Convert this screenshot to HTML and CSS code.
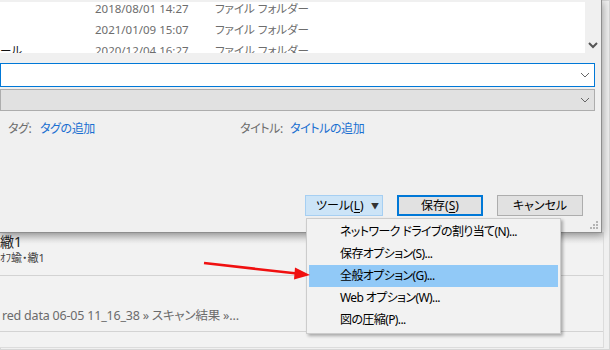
FILE: index.html
```html
<!DOCTYPE html>
<html lang="ja">
<head>
    <meta charset="UTF-8">
    <meta name="viewport" content="width=device-width, initial-scale=1.0">
    <title>名前を付けて保存 - ツール</title>
    <link rel="stylesheet" href="styles.css">
</head>
<body>
    <div class="desktop">
        <!-- window behind the dialog -->
        <div class="back-window">
            <div class="back-head">
                <div class="back-title">繖1</div>
                <div class="back-sub">ｵﾌ蝓・繖1</div>
            </div>
            <div class="crumbs">red data 06-05 11_16_38 » スキャン結果 »…</div>
        </div>

        <!-- save dialog -->
        <div class="dialog">
            <div class="file-pane">
                <div class="files">
                    <div class="file-row"><span class="name"></span><span class="date">2018/08/01 14:27</span><span class="kind">ファイル フォルダー</span></div>
                    <div class="file-row"><span class="name"></span><span class="date">2021/01/09 15:07</span><span class="kind">ファイル フォルダー</span></div>
                    <div class="file-row"><span class="name">ール</span><span class="date">2020/12/04 16:27</span><span class="kind">ファイル フォルダー</span></div>
                </div>
                <div class="scroll">
                    <svg width="10" height="7" viewBox="0 0 10 7"><path d="M1 1 L5 5 L9 1" fill="none" stroke="#555" stroke-width="2"/></svg>
                </div>
            </div>
            <div class="combo combo-active">
                <svg width="10" height="6" viewBox="0 0 10 6"><path d="M1 1 L5 5 L9 1" fill="none" stroke="#666" stroke-width="1"/></svg>
            </div>
            <div class="combo combo-disabled">
                <svg width="10" height="6" viewBox="0 0 10 6"><path d="M1 1 L5 5 L9 1" fill="none" stroke="#666" stroke-width="1"/></svg>
            </div>
            <div class="meta">
                <div class="meta-group">
                    <span class="meta-label">タグ:</span>
                    <span class="meta-link">タグの追加</span>
                </div>
                <div class="meta-group">
                    <span class="meta-label wide">タイトル:</span>
                    <span class="meta-link">タイトルの追加</span>
                </div>
            </div>
            <div class="actions">
                <button class="btn btn-tools">ツール(<u>L</u>)<span class="caret">▼</span></button>
                <button class="btn btn-default">保存(<u>S</u>)</button>
                <button class="btn">キャンセル</button>
            </div>
            <svg class="grip" width="8" height="8" viewBox="0 0 8 8">
                <rect x="6" y="0" width="2" height="2" fill="#b4b4b4"/>
                <rect x="3" y="3" width="2" height="2" fill="#b4b4b4"/>
                <rect x="6" y="3" width="2" height="2" fill="#b4b4b4"/>
                <rect x="0" y="6" width="2" height="2" fill="#b4b4b4"/>
                <rect x="3" y="6" width="2" height="2" fill="#b4b4b4"/>
                <rect x="6" y="6" width="2" height="2" fill="#b4b4b4"/>
            </svg>
        </div>

        <!-- tools dropdown -->
        <ul class="menu">
            <li>ネットワーク ドライブの割り当て(N)...</li>
            <li>保存オプション(S)...</li>
            <li class="hover">全般オプション(G)...</li>
            <li>Web オプション(W)...</li>
            <li>図の圧縮(P)...</li>
        </ul>

        <svg class="arrow" width="610" height="350" viewBox="0 0 610 350">
            <line x1="204" y1="263" x2="297" y2="273.5" stroke="#f01010" stroke-width="2.5"/>
            <polygon points="295,267.5 310,275 294,279.5" fill="#f01010"/>
        </svg>
    </div>
</body>
</html>
```

FILE: styles.css
```css
* {
    margin: 0;
    padding: 0;
    box-sizing: border-box;
}
body {
    font-family: "Noto Sans", "Noto Sans CJK JP", sans-serif;
    font-size: 12px;
    font-feature-settings: "palt";
    background: #f0f0f0;
}
.desktop {
    position: relative;
    width: 610px;
    height: 350px;
    overflow: hidden;
    background: #f0f0f0;
    box-shadow: inset 0 0 0 1px #d6d6d6;
}

/* window behind */
.back-window {
    position: absolute;
    left: 0;
    top: 232px;
    width: 604px;
    height: 116px;
    background: #f2f2f2;
    border-right: 1px solid #dcdcdc;
    border-bottom: 1px solid #dcdcdc;
}
.back-head {
    height: 44px;
    padding-top: 1px;
    border-bottom: 1px solid #d3d3d3;
    background: linear-gradient(#d8d8d8, #f2f2f2 12px);
}
.back-title {
    font-size: 14px;
    line-height: 18px;
    color: #222;
}
.back-sub {
    font-size: 11px;
    line-height: 14px;
    color: #444;
}
.crumbs {
    height: 56px;
    padding: 31px 0 0 2px;
    font-size: 12.5px;
    line-height: 18px;
    letter-spacing: -0.2px;
    color: #6b6b6b;
    border-bottom: 1px solid #d3d3d3;
}

/* dialog */
.dialog {
    position: absolute;
    left: 0;
    top: 0;
    width: 602px;
    height: 233px;
    display: flex;
    flex-direction: column;
    background: #f0f0f0;
    border-right: 1px solid #8e8e8e;
    border-bottom: 1px solid #8e8e8e;
    box-shadow: 1px 2px 8px rgba(0, 0, 0, 0.35);
}
.file-pane {
    display: flex;
    height: 51px;
    margin-top: 2px;
}
.files {
    width: 585px;
    background: #fff;
    overflow: hidden;
}
.file-row {
    display: flex;
    height: 21px;
    line-height: 21px;
    font-size: 11.5px;
    color: #6d6d6d;
}
.file-row:first-child {
    margin-top: -4px;
}
.name {
    width: 95px;
    color: #111;
}
.date {
    width: 120px;
}
.scroll {
    flex: 1;
    display: flex;
    align-items: flex-end;
    justify-content: center;
    padding-bottom: 4px;
}
.combo {
    display: flex;
    align-items: center;
    justify-content: flex-end;
    width: 595px;
    padding-right: 4px;
    border: 1px solid #adadad;
}
.combo-active {
    height: 24px;
    margin-top: 10px;
    background: #fff;
    border-color: #0078d7;
}
.combo-disabled {
    height: 22px;
    margin-top: 2px;
    background: #e1e1e1;
}
.meta {
    display: flex;
    margin-top: 10px;
    padding-left: 8px;
    line-height: 16px;
    letter-spacing: -0.4px;
}
.meta-group {
    display: flex;
    width: 232px;
}
.meta-label {
    width: 32px;
    color: #6d6d6d;
}
.meta-label.wide {
    width: 50px;
}
.meta-link {
    color: #1a6fd1;
}
.actions {
    display: flex;
    justify-content: flex-end;
    gap: 14px;
    margin-top: auto;
    padding: 0 18px 16px 0;
}
.btn {
    width: 86px;
    height: 21px;
    font: inherit;
    line-height: 17px;
    color: #000;
    background: #e1e1e1;
    border: 1px solid #adadad;
}
.btn u {
    text-underline-offset: 2px;
}
.btn-tools {
    width: 78px;
    display: flex;
    align-items: center;
    padding-left: 10px;
    background: #cce4f7;
    border-color: #a6cff2;
}
.caret {
    margin-left: auto;
    margin-right: 3px;
    font-size: 8px;
    color: #333;
}
.btn-default {
    border: 2px solid #0078d7;
}
.grip {
    position: absolute;
    right: 3px;
    bottom: 3px;
}

/* dropdown */
.menu {
    position: absolute;
    left: 306px;
    top: 218px;
    width: 255px;
    padding: 2px;
    list-style: none;
    background: #f2f2f2;
    border: 1px solid #cccccc;
    box-shadow: 2px 2px 3px rgba(0, 0, 0, 0.3);
}
.menu li {
    height: 22px;
    line-height: 22px;
    padding-left: 31px;
    letter-spacing: -0.6px;
    color: #000;
}
.menu li.hover {
    background: #91c9f7;
}
.arrow {
    position: absolute;
    left: 0;
    top: 0;
    pointer-events: none;
}
```
